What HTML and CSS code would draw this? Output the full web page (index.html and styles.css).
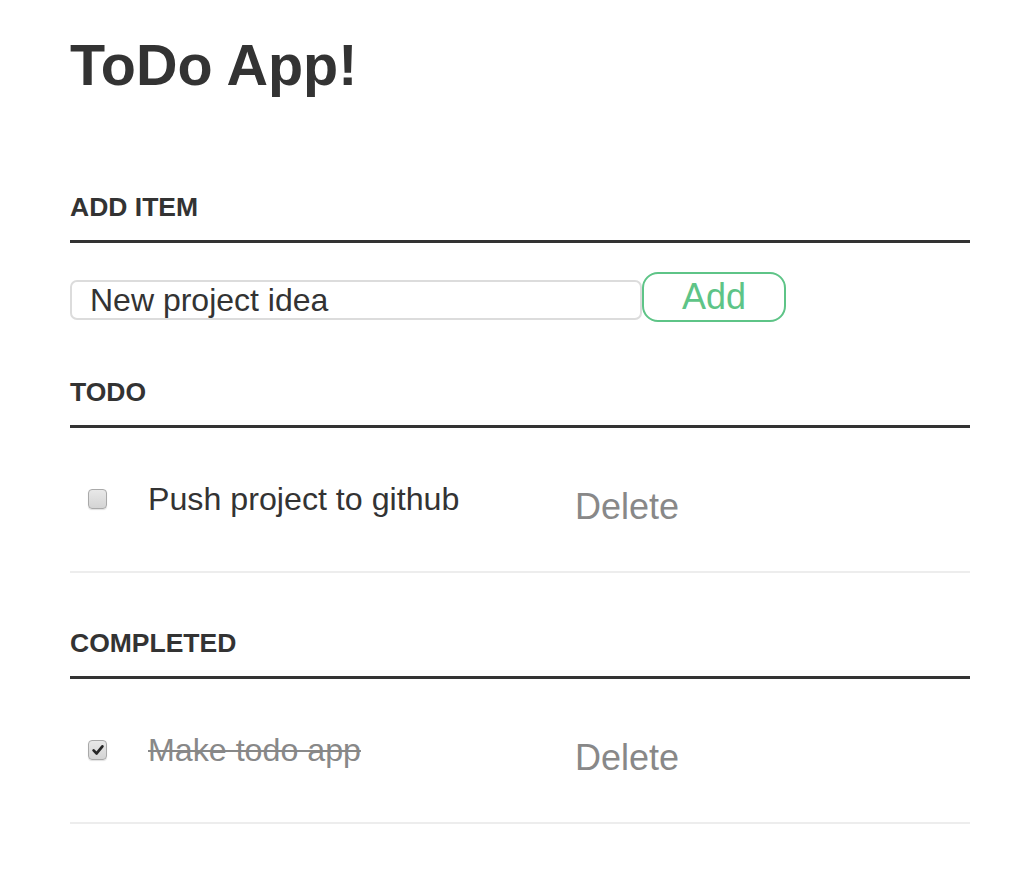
FILE: index.html
```html
<!DOCTYPE html>
<html lang="en">
<head>
<meta charset="utf-8">
<title>ToDo App!</title>
<link rel="stylesheet" href="styles.css">
</head>
<body>
<main class="container">
  <h1 class="title">ToDo App!</h1>

  <h3 class="section-title section-title--add">Add item</h3>
  <div class="add-row">
    <input class="add-input" type="text" value="New project idea">
    <button class="add-btn" type="button">Add</button>
  </div>

  <h3 class="section-title">Todo</h3>
  <ul class="list">
    <li class="item">
      <span class="check" aria-hidden="true"></span>
      <span class="item-label">Push project to github</span>
      <button class="delete-btn" type="button">Delete</button>
    </li>
  </ul>

  <h3 class="section-title">Completed</h3>
  <ul class="list">
    <li class="item item--done">
      <span class="check check--on" aria-hidden="true">
        <svg viewBox="0 0 20 20" width="20" height="20"><path d="M4.5 10.5 L8.3 14.3 L15.5 5.5" fill="none" stroke="#262626" stroke-width="3.4" stroke-linecap="round" stroke-linejoin="round"/></svg>
      </span>
      <span class="item-label">Make todo app</span>
      <button class="delete-btn" type="button">Delete</button>
    </li>
  </ul>
</main>
</body>
</html>
```

FILE: styles.css
```css
html, body {
  margin: 0;
  padding: 0;
  background: #fff;
}

body {
  font-family: "Liberation Sans", Arial, Helvetica, sans-serif;
  color: #333;
}

.container {
  width: 900px;
  margin-left: 70px;
  display: flex;
  flex-direction: column;
}

.title {
  margin: 37px 0 0;
  font-size: 57.5px;
  line-height: 56px;
  font-weight: 700;
  color: #333;
}

.section-title {
  margin: 57px 0 0;
  padding: 0 0 20px;
  font-size: 26.5px;
  line-height: 26px;
  font-weight: 700;
  text-transform: uppercase;
  color: #333;
  border-bottom: 3px solid #333;
}

.section-title--add {
  margin-top: 101px;
}

.add-row {
  display: flex;
  align-items: flex-start;
  margin-top: 29px;
}

.add-input {
  box-sizing: border-box;
  width: 572px;
  height: 40px;
  margin: 8px 0 0;
  padding: 0 0 0 18px;
  border: 2px solid #dcdcdc;
  border-radius: 7px;
  font-family: "Liberation Sans", Arial, Helvetica, sans-serif;
  font-size: 32px;
  color: #333;
  outline: none;
}

.add-btn {
  box-sizing: border-box;
  width: 144px;
  height: 50px;
  margin: 0;
  padding: 0 0 1px;
  background: #fff;
  border: 2px solid #5ec487;
  border-radius: 16px;
  font-family: "Liberation Sans", Arial, Helvetica, sans-serif;
  font-size: 36px;
  line-height: 1;
  color: #5ec487;
}

.list {
  list-style: none;
  margin: 0;
  padding: 0;
}

.item {
  box-sizing: border-box;
  height: 145px;
  display: flex;
  align-items: flex-start;
  padding-top: 53px;
  border-bottom: 2px solid #ededed;
}

.check {
  box-sizing: border-box;
  flex: none;
  width: 19px;
  height: 20px;
  margin: 8px 0 0 18px;
  border: 1.5px solid #a9a9a9;
  border-radius: 4px;
  background: linear-gradient(#e8e8e8, #d4d4d4);
  box-shadow: 0 1px 1px rgba(0, 0, 0, 0.12);
  display: flex;
  align-items: center;
  justify-content: center;
}

.check svg {
  width: 16px;
  height: 16px;
}

.item-label {
  width: 427px;
  margin-left: 41px;
  font-size: 32.2px;
  line-height: 36px;
  color: #333;
}

.item--done .item-label {
  color: #888;
  text-decoration: line-through;
  text-decoration-thickness: 2px;
}

.delete-btn {
  margin: 6px 0 0;
  padding: 0;
  background: none;
  border: 0;
  font-family: "Liberation Sans", Arial, Helvetica, sans-serif;
  font-size: 36px;
  line-height: 40px;
  color: #888;
}
```
